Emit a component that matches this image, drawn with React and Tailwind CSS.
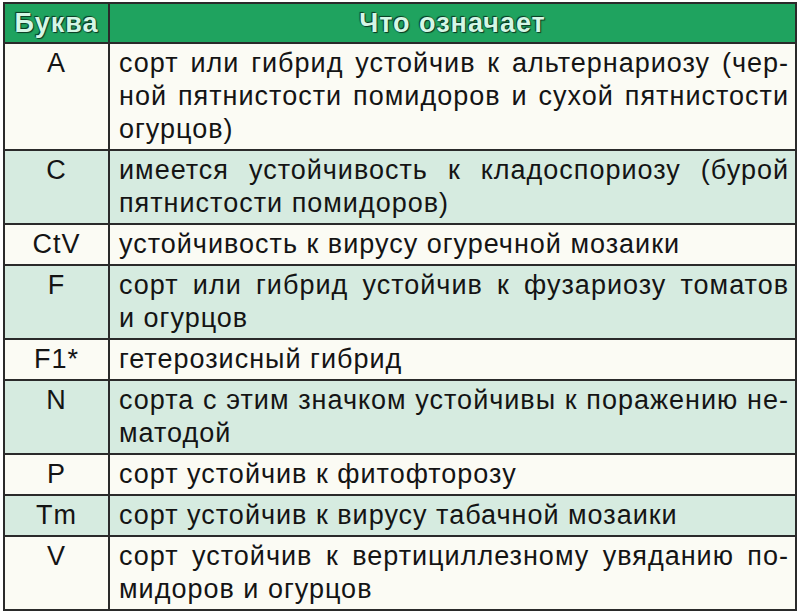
import React from "react";

const rows = [
  { k: "A", lines: ["сорт или гибрид устойчив к альтернариозу (чер-", "ной пятнистости помидоров и сухой пятнистости", "огурцов)"], mint: false },
  { k: "C", lines: ["имеется устойчивость к  кладоспориозу (бурой", "пятнистости помидоров)"], mint: true },
  { k: "CtV", lines: ["устойчивость к вирусу огуречной мозаики"], mint: false },
  { k: "F", lines: ["сорт или гибрид устойчив к фузариозу томатов", "и огурцов"], mint: true },
  { k: "F1*", lines: ["гетерозисный гибрид"], mint: false },
  { k: "N", lines: ["сорта с этим значком устойчивы к поражению не-", "матодой"], mint: true },
  { k: "P", lines: ["сорт устойчив к фитофторозу"], mint: false },
  { k: "Tm", lines: ["сорт устойчив к вирусу табачной мозаики"], mint: true },
  { k: "V", lines: ["сорт устойчив к вертициллезному увяданию по-", "мидоров и огурцов"], mint: false },
];

const headStyle = "font-bold text-[27px] tracking-[1px] leading-[36px] text-[#d4f7e6] [text-shadow:0_0_1px_#0b3a22,1px_1px_1px_#0b3a22,-1px_-1px_1px_#0b3a22]";

export default function App() {
  return (
    <div className="w-[800px] h-[611px] bg-white pt-[2px] pl-[3px] [font-family:Liberation_Sans,Arial,sans-serif] text-[#141414]">
      <div className="w-[794px] border-2 border-[#2a2a2a] flex flex-col">
        <div className="flex bg-[#1fa35f] border-b-2 border-[#2a2a2a] h-[40px]">
          <div className={"w-[105px] shrink-0 border-r-2 border-[#2a2a2a] flex items-center justify-center " + headStyle}>Буква</div>
          <div className={"flex-1 flex items-center justify-center " + headStyle}>Что означает</div>
        </div>
        {rows.map((r, i) => (
          <div
            key={r.k}
            className={
              "flex " +
              (i < rows.length - 1 ? "border-b-2 border-[#2a2a2a] " : "") +
              (r.mint ? "bg-[#d6ebe0]" : "bg-[#fbfbf4]")
            }
          >
            <div className="w-[105px] shrink-0 border-r-2 border-[#2a2a2a] text-center text-[27px] tracking-[1px] leading-[33px] pt-[3px]">
              {r.k}
            </div>
            <div className="flex-1 min-w-0 pl-[9px] pr-[6px] pt-[3px] pb-[3px] text-[27px] tracking-[1px] leading-[33px]">
              {r.lines.map((l, j) =>
                j < r.lines.length - 1 ? (
                  <div key={j} className="text-justify [text-align-last:justify] whitespace-nowrap">
                    {l}
                  </div>
                ) : (
                  <div key={j} className="whitespace-pre">
                    {l}
                  </div>
                )
              )}
            </div>
          </div>
        ))}
      </div>
    </div>
  );
}
